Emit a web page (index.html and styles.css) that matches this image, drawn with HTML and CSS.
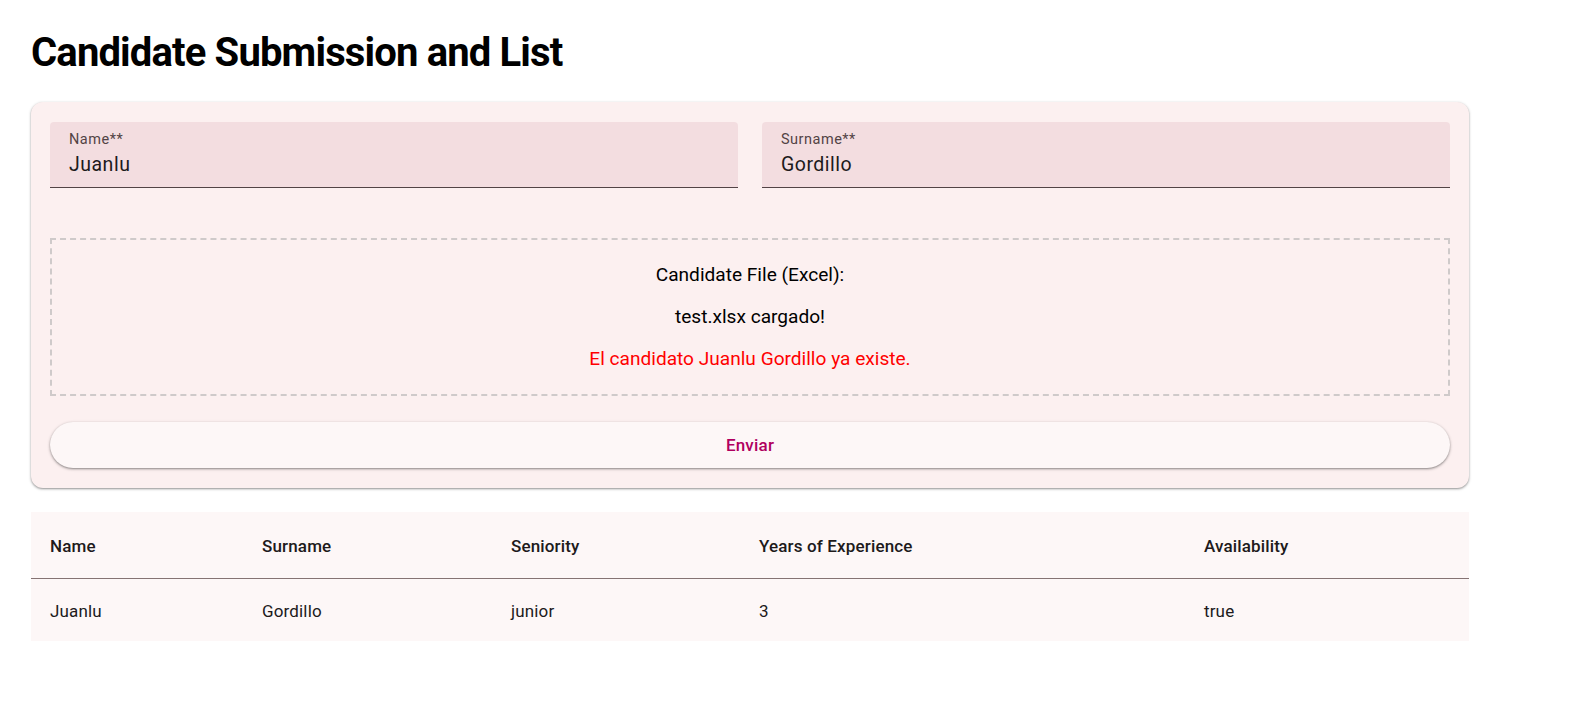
FILE: index.html
```html
<!DOCTYPE html>
<html lang="en">
<head>
<meta charset="utf-8">
<title>Candidate Submission and List</title>
<link rel="stylesheet" href="styles.css">
</head>
<body>
<main class="page">
  <h1 class="title">Candidate Submission and List</h1>

  <form class="card">
    <div class="fields">
      <label class="field">
        <span class="field-label">Name**</span>
        <span class="field-value">Juanlu</span>
      </label>
      <label class="field">
        <span class="field-label">Surname**</span>
        <span class="field-value">Gordillo</span>
      </label>
    </div>

    <div class="dropzone">
      <p class="drop-line">Candidate File (Excel):</p>
      <p class="drop-line">test.xlsx cargado!</p>
      <p class="drop-line error">El candidato Juanlu Gordillo ya existe.</p>
    </div>

    <button type="button" class="submit">Enviar</button>
  </form>

  <table class="list">
    <thead>
      <tr>
        <th class="c-name">Name</th>
        <th class="c-surname">Surname</th>
        <th class="c-seniority">Seniority</th>
        <th class="c-years">Years of Experience</th>
        <th class="c-avail">Availability</th>
      </tr>
    </thead>
    <tbody>
      <tr>
        <td>Juanlu</td>
        <td>Gordillo</td>
        <td>junior</td>
        <td>3</td>
        <td>true</td>
      </tr>
    </tbody>
  </table>
</main>
</body>
</html>
```

FILE: styles.css
```css
* { box-sizing: border-box; }

html, body {
  margin: 0;
  background: #ffffff;
}

body {
  font-family: Roboto, "Noto Sans", "Liberation Sans", sans-serif;
  color: #201a1b;
}

.page {
  width: 1438px;
  margin-left: 31px;
  padding-top: 29px;
}

.title {
  margin: 0 0 26px 0;
  font-size: 40px;
  font-weight: 700;
  line-height: 47px;
  color: #000;
  letter-spacing: -0.85px;
}

.card {
  background: #fcf0f0;
  border-radius: 12px;
  padding: 20px 19px 20px 19px;
  box-shadow: 0 1px 2px rgba(0,0,0,0.35), 0 1px 3px 1px rgba(0,0,0,0.08);
  display: flex;
  flex-direction: column;
}

.fields {
  display: flex;
  gap: 24px;
}

.field {
  flex: 1;
  height: 66px;
  background: #f3dde0;
  border-radius: 4px 4px 0 0;
  border-bottom: 1px solid #524345;
  padding: 9px 19px 0 19px;
  display: flex;
  flex-direction: column;
}

.field-label {
  font-size: 14.5px;
  line-height: 17px;
  letter-spacing: 0.5px;
  color: #524345;
}

.field-value {
  margin-top: 5px;
  font-size: 19.5px;
  line-height: 24px;
  letter-spacing: 0.5px;
  color: #201a1b;
}

.dropzone {
  margin-top: 50px;
  border: 2px dashed #cfcaca;
  padding: 4px 10px 0 10px;
  text-align: center;
  height: 158px;
}

.drop-line {
  margin: 20px 0;
  font-size: 19.1px;
  line-height: 22px;
  color: #000;
}

.drop-line.error {
  color: #ff0000;
}

.submit {
  margin-top: 26px;
  height: 46px;
  border: none;
  border-radius: 23px;
  background: #fdf7f7;
  box-shadow: 0 1px 2px rgba(0,0,0,0.35), 0 1px 3px 1px rgba(0,0,0,0.1);
  font-family: Roboto, "Noto Sans", "Liberation Sans", sans-serif;
  font-size: 17px;
  font-weight: 500;
  letter-spacing: 0.2px;
  color: #b0005f;
  cursor: pointer;
}

.list {
  margin-top: 24px;
  width: 1438px;
  border-collapse: collapse;
  background: #fdf7f7;
  table-layout: fixed;
}

.list th, .list td {
  text-align: left;
  padding: 0 19px;
  font-size: 17px;
  color: #201a1b;
  letter-spacing: 0.15px;
}

.list th {
  height: 66px;
  padding-top: 2px;
  font-weight: 500;
  border-bottom: 1px solid #857373;
}

.list td {
  height: 63px;
  padding-top: 2px;
  font-weight: 400;
}

.c-name { width: 212px; }
.c-surname { width: 249px; }
.c-seniority { width: 248px; }
.c-years { width: 445px; }
.c-avail { width: 284px; }
```
